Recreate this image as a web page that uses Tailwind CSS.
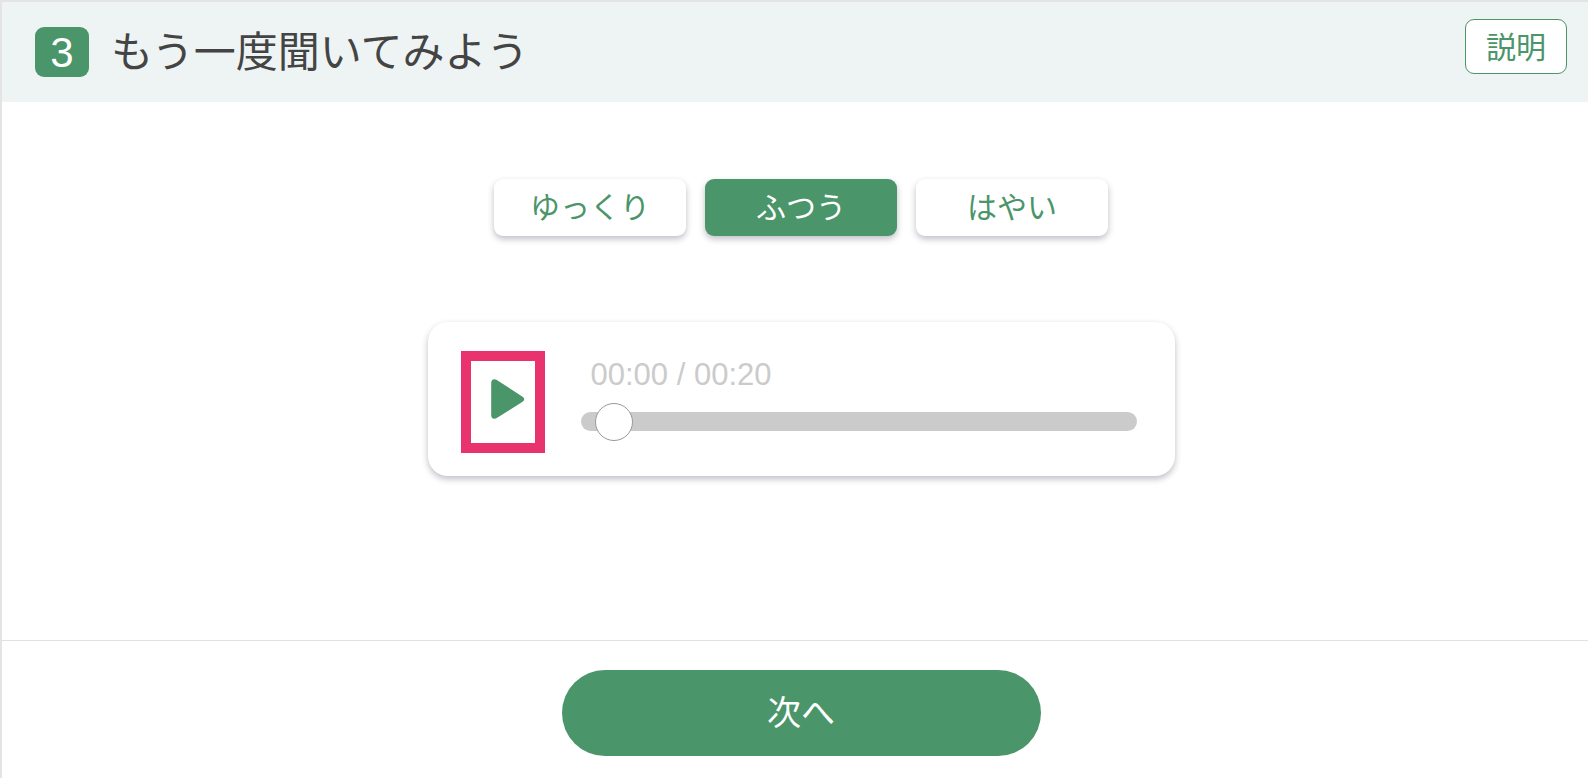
<!DOCTYPE html>
<html lang="ja">
<head>
    <meta charset="UTF-8">
    <meta name="viewport" content="width=device-width, initial-scale=1.0">
    <title>もう一度聞いてみよう</title>
    <script src="https://cdn.jsdelivr.net/npm/@tailwindcss/browser@4"></script>
</head>

<body class="flex min-h-screen flex-col border-t-2 border-l-2 border-[#e4e4e4] bg-white font-['Liberation_Sans','Noto_Sans_CJK_JP',sans-serif] text-[#444444]">

    <header class="flex items-start justify-between bg-[#eef4f4] pt-[17px] pr-[21px] pb-[25px] pl-[33px]">
        <div class="flex items-center gap-[22px] pt-2">
            <span class="flex h-[50px] w-[54px] items-center justify-center rounded-[9px] bg-[#4a9569] pt-0.5 text-[42px] leading-none text-white">3</span>
            <h1 class="pb-1.5 font-['Noto_Sans_CJK_JP',sans-serif] text-[42px] leading-none">もう一度聞いてみよう</h1>
        </div>
        <button type="button" class="h-[55px] w-[102px] rounded-[9px] border border-[#4a9569] bg-white pt-0.5 text-[30px] leading-none text-[#4a9569]">説明</button>
    </header>

    <main class="flex flex-1 flex-col items-center pt-[77px] pb-10 pl-3">
        <!-- playback speed -->
        <div class="flex gap-[19px]">
            <button type="button" class="h-[57px] w-48 rounded-[9px] bg-white text-[30px] leading-none text-[#4a9569] shadow-[0_3px_6px_rgba(40,40,70,0.3)]">ゆっくり</button>
            <button type="button" aria-pressed="true" class="h-[57px] w-48 rounded-[9px] bg-[#4a9569] text-[30px] leading-none text-white shadow-[0_3px_6px_rgba(40,40,70,0.3)]">ふつう</button>
            <button type="button" class="h-[57px] w-48 rounded-[9px] bg-white text-[30px] leading-none text-[#4a9569] shadow-[0_3px_6px_rgba(40,40,70,0.3)]">はやい</button>
        </div>

        <!-- audio player -->
        <div class="mt-[86px] flex w-full max-w-[747px] items-start gap-9 rounded-[20px] bg-white pt-[29px] pr-[38px] pb-[23px] pl-[33px] shadow-[0_3px_6px_rgba(40,40,70,0.3)]">
            <button id="play" type="button" aria-label="再生" class="shrink-0 border-10 border-[#e9336f]">
                <svg class="block h-[82px] w-16" viewBox="0 0 64 82" fill="#4a9569">
                    <path d="M20.2 22 Q20.2 18.2 23.5 18.2 Q24.8 18.2 26.2 19.2 L51.2 35.6 Q53.2 36.9 53.2 38.3 Q53.2 39.7 51.2 41 L26.2 56.8 Q24.8 57.8 23.3 57.8 Q20.2 57.8 20.2 54 Z"/>
                </svg>
            </button>
            <div class="min-w-0 flex-1 pt-1.5">
                <label for="seek" class="block pl-2.5 text-[31px] leading-9 text-[#cbcbcb]">00:00 / 00:20</label>
                <input id="seek" type="range" min="0" max="20" value="0" class="mt-[19px] block h-[19px] w-full appearance-none rounded-full bg-[#cbcbcb] px-3.5 [&::-webkit-slider-thumb]:h-[38px] [&::-webkit-slider-thumb]:w-[38px] [&::-webkit-slider-thumb]:appearance-none [&::-webkit-slider-thumb]:rounded-full [&::-webkit-slider-thumb]:border [&::-webkit-slider-thumb]:border-[#999999] [&::-webkit-slider-thumb]:bg-white">
            </div>
        </div>
    </main>

    <footer class="flex justify-center border-t border-[#e2e2e2] pt-[29px] pb-[22px] pl-3">
        <button type="button" class="h-[86px] w-[479px] rounded-full bg-[#4a9569] text-[34px] leading-none text-white">次へ</button>
    </footer>

</body>
</html>
